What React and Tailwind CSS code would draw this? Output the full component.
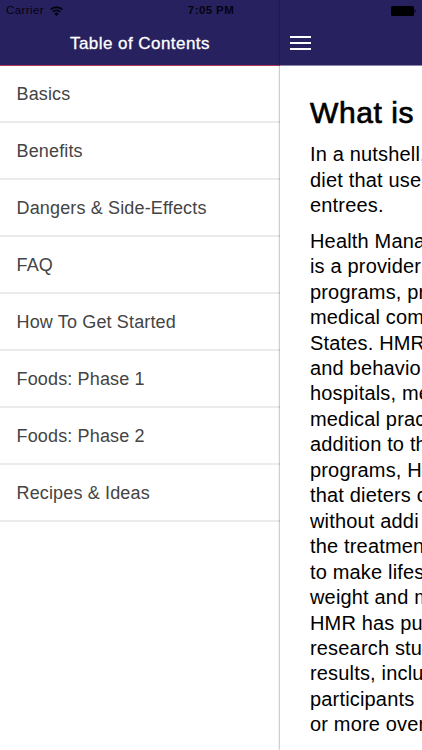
import React from 'react';

const chapters = [
  'Basics',
  'Benefits',
  'Dangers & Side-Effects',
  'FAQ',
  'How To Get Started',
  'Foods: Phase 1',
  'Foods: Phase 2',
  'Recipes & Ideas',
];

const intro = ['In a nutshell,', 'diet that use', 'entrees.'];

const body = [
  'Health Mana',
  'is a provider',
  'programs, pr',
  'medical com',
  'States. HMR',
  'and behavio',
  'hospitals, me',
  'medical prac',
  'addition to th',
  'programs, H',
  'that dieters c',
  'without addi',
  'the treatmen',
  'to make lifes',
  'weight and m',
  'HMR has pu',
  'research stu',
  'results, inclu',
  'participants ',
  'or more over',
];

const WifiIcon = () => (
  <svg width="13" height="10" viewBox="0 0 12 9" fill="none" stroke="#04030f">
    <path d="M0.6 3.3a7.6 7.6 0 0 1 10.8 0" strokeWidth="1.7" />
    <path d="M2.5 5.4a4.9 4.9 0 0 1 7 0" strokeWidth="1.5" />
    <path d="M6 9 4 7a2.8 2.8 0 0 1 4 0z" fill="#04030f" stroke="none" />
  </svg>
);

const BatteryIcon = () => (
  <svg width="25" height="10" viewBox="0 0 25 10" fill="#000">
    <rect x="0" y="0" width="23" height="10" rx="1.5" />
    <path d="M23.6 3.3c1.5.4 1.5 3 0 3.4z" />
  </svg>
);

const Paragraph = ({ lines }) => (
  <p className="text-[20px] leading-[25.45px] tracking-[0.17px] text-black whitespace-nowrap">
    {lines.map((line) => (
      <span key={line} className="block">{line}</span>
    ))}
  </p>
);

const App = () => {
  return (
    <div className="relative w-[422px] h-[750px] flex overflow-hidden bg-white font-['Liberation_Sans',Arial,sans-serif]">
      {/* Side menu */}
      <aside className="w-[280px] shrink-0 flex flex-col">
        <header className="h-[66px] shrink-0 bg-[#28215f] border-b border-[#b0385c] pt-[22px]">
          <h1 className="h-[43px] flex items-center justify-center text-[17px] tracking-[0.45px] text-white [-webkit-text-stroke:0.3px_white]">
            Table of Contents
          </h1>
        </header>
        <nav>
          {chapters.map((chapter) => (
            <a
              key={chapter}
              className="h-[57px] flex items-center pl-[16.5px] pt-px text-[18px] tracking-[0.15px] text-[#444] border-b-2 border-[#ebebeb]"
            >
              {chapter}
            </a>
          ))}
        </nav>
      </aside>

      {/* Article panel */}
      <main className="flex-1 min-w-0 flex flex-col bg-white shadow-[0_0_2px_rgba(0,0,0,0.6)]">
        <header className="h-[66px] shrink-0 bg-[#28215f] border-b border-[#8b86ab] pt-9 pl-2.5">
          <button className="w-[21px] flex flex-col gap-1">
            <span className="h-0.5 w-full bg-white" />
            <span className="h-0.5 w-full bg-white" />
            <span className="h-0.5 w-full bg-white" />
          </button>
        </header>
        <article className="flex-1 overflow-hidden pl-[30px] pt-[29px]">
          <h2 className="text-[30px] leading-9 tracking-[0.6px] mb-[11px] text-black whitespace-nowrap [-webkit-text-stroke:0.7px_black]">
            What is
          </h2>
          <div className="flex flex-col gap-2.5 pt-[0.4px]">
            <Paragraph lines={intro} />
            <Paragraph lines={body} />
          </div>
        </article>
      </main>

      {/* Status bar */}
      <div className="absolute top-0 inset-x-0 h-[22px] grid grid-cols-3 items-center px-1.5 text-[11.5px] text-[#04030f]">
        <div className="flex items-center gap-1.5">
          <span className="tracking-[0.4px]">Carrier</span>
          <WifiIcon />
        </div>
        <span className="text-center font-bold tracking-[0.4px]">7:05 PM</span>
        <div className="flex justify-end">
          <BatteryIcon />
        </div>
      </div>
    </div>
  );
};

export default App;
